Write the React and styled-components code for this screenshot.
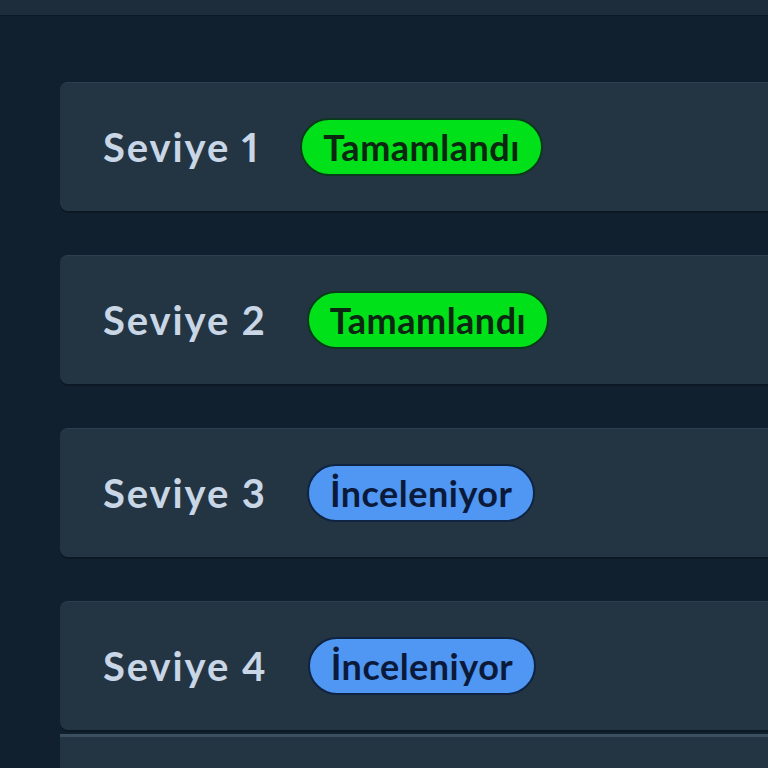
import React from "react";
import styled, { createGlobalStyle } from "styled-components";

const GlobalStyle = createGlobalStyle`
  html, body {
    margin: 0;
    padding: 0;
    background: #10202e;
    font-family: "Lato", "Open Sans", sans-serif;
    overflow: hidden;
  }
`;

const levels = [
  { name: "Seviye 1", status: "done" },
  { name: "Seviye 2", status: "done" },
  { name: "Seviye 3", status: "review" },
  { name: "Seviye 4", status: "review" },
];

const labels = {
  done: "Tamamlandı",
  review: "İnceleniyor",
};

export default function App() {
  return (
    <>
      <GlobalStyle />
      <Page>
        <TopBar />
        <LevelList>
          {levels.map((level) => (
            <LevelCard key={level.name}>
              <LevelName>{level.name}</LevelName>
              <StatusBadge $status={level.status}>
                {labels[level.status]}
              </StatusBadge>
            </LevelCard>
          ))}
          <NextCard />
        </LevelList>
      </Page>
    </>
  );
}

const Page = styled.div`
  width: 768px;
  height: 768px;
  overflow: hidden;
  display: flex;
  flex-direction: column;
  background: #10202e;
`;

const TopBar = styled.div`
  height: 15px;
  flex-shrink: 0;
  background: #1e2d3b;
  border-bottom: 1px solid #0c1a26;
`;

const LevelList = styled.div`
  display: flex;
  flex-direction: column;
  gap: 44px;
  padding: 66px 0 0 60px;
  margin-right: -40px;
`;

const LevelCard = styled.div`
  height: 129px;
  flex-shrink: 0;
  display: flex;
  align-items: center;
  padding-left: 43px;
  box-sizing: border-box;
  background: #233543;
  border-top: 1px solid #2d4050;
  border-radius: 8px;
  box-shadow: 0 2px 0 #0c1924;
`;

const NextCard = styled.div`
  height: 60px;
  margin-top: -40px;
  flex-shrink: 0;
  background: #233543;
  border-top: 3px solid #3a5060;
`;

const LevelName = styled.span`
  font-size: 40px;
  font-weight: 700;
  color: #c9d6e6;
  letter-spacing: 1.9px;
  font-variant-numeric: proportional-nums;
  margin-right: 40px;
`;

const StatusBadge = styled.span`
  display: inline-flex;
  align-items: center;
  justify-content: center;
  height: 58px;
  padding: 0 21px;
  box-sizing: border-box;
  border-radius: 29px;
  font-size: 36px;
  font-weight: 700;
  letter-spacing: 0.5px;
  background: ${(p) => (p.$status === "done" ? "#00e11a" : "#4f97f2")};
  color: ${(p) => (p.$status === "done" ? "#0b2611" : "#0b1a3a")};
  border: 2px solid ${(p) => (p.$status === "done" ? "#0a3a1c" : "#0e2442")};
`;
